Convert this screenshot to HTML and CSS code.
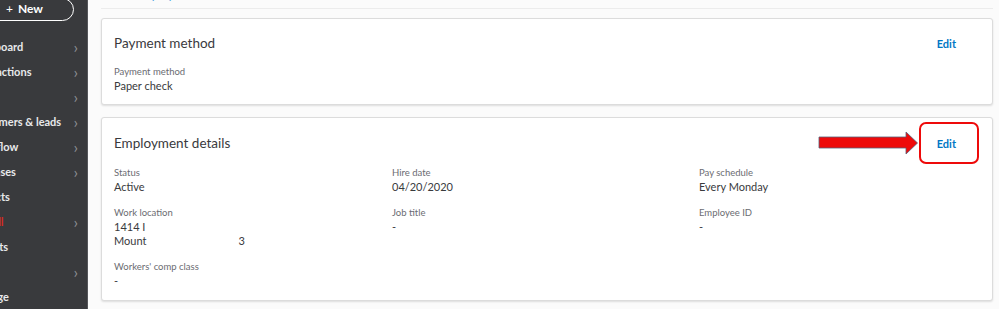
FILE: index.html
```html
<!DOCTYPE html>
<html>
<head>
<meta charset="utf-8">
<link rel="stylesheet" href="styles.css">
</head>
<body>
<aside class="sidebar">
  <div class="new-btn"><span class="plus">+</span> New</div>
  <nav class="nav">
    <div class="nav-item"><span>Dashboard</span><span class="chev">&#8250;</span></div>
    <div class="nav-item"><span>Transactions</span><span class="chev">&#8250;</span></div>
    <div class="nav-item"><span>Sales</span><span class="chev">&#8250;</span></div>
    <div class="nav-item"><span>Customers &amp; leads</span><span class="chev">&#8250;</span></div>
    <div class="nav-item"><span>Cash flow</span><span class="chev">&#8250;</span></div>
    <div class="nav-item"><span>Expenses</span><span class="chev">&#8250;</span></div>
    <div class="nav-item"><span>Projects</span></div>
    <div class="nav-item"><span class="red">Payroll</span><span class="chev">&#8250;</span></div>
    <div class="nav-item"><span>Reports</span></div>
    <div class="nav-item"><span>Taxes</span><span class="chev">&#8250;</span></div>
    <div class="nav-item"><span>Mileage</span></div>
  </nav>
</aside>
<main class="main">
  <div class="topbar"><span class="crumb">Employee list</span></div>

  <section class="card card-pay">
    <div class="card-head">
      <h2 class="card-title">Payment method</h2>
      <a class="edit">Edit</a>
    </div>
    <div class="field">
      <div class="label">Payment method</div>
      <div class="value">Paper check</div>
    </div>
  </section>

  <section class="card card-emp">
    <div class="card-head">
      <h2 class="card-title">Employment details</h2>
      <a class="edit">Edit</a>
    </div>
    <div class="grid">
      <div class="field"><div class="label">Status</div><div class="value">Active</div></div>
      <div class="field"><div class="label">Hire date</div><div class="value">04/20/2020</div></div>
      <div class="field"><div class="label">Pay schedule</div><div class="value">Every Monday</div></div>
      <div class="field"><div class="label">Work location</div><div class="value">1414 I<br>Mount<span class="redact"></span>3</div></div>
      <div class="field"><div class="label">Job title</div><div class="value">-</div></div>
      <div class="field"><div class="label">Employee ID</div><div class="value">-</div></div>
      <div class="field"><div class="label">Workers' comp class</div><div class="value">-</div></div>
    </div>
    <div class="highlight-box"></div>
    <svg class="arrow" width="101" height="25" viewBox="0 0 101 25">
      <polygon points="1,6 88,6 88,1 99.5,12 88,23 88,17 1,17" fill="#ee0a0a" stroke="#55607a" stroke-width="0.8"/>
    </svg>
  </section>
</main>
</body>
</html>
```
FILE: styles.css
```css
* { box-sizing: border-box; }
html, body { margin: 0; padding: 0; }
body {
  display: flex;
  width: 999px;
  height: 309px;
  overflow: hidden;
  font-family: Lato, "Open Sans", sans-serif;
  background: #fbfbfb;
  color: #393a3d;
}
.sidebar {
  width: 88px;
  flex: none;
  background: #393a3d;
  border-right: 1px solid #56575b;
  overflow: hidden;
  position: relative;
}
.new-btn {
  margin-left: -40px;
  margin-top: -2px;
  width: 114px;
  height: 23px;
  border: 1.5px solid #ffffff;
  border-radius: 12px;
  color: #fff;
  font-weight: 700;
  font-size: 12px;
  line-height: 20px;
  padding-left: 45px;
  white-space: nowrap;
}
.new-btn .plus { margin-right: 2px; font-weight: 400; }
.nav { margin-top: 13px; }
.nav-item {
  height: 25px;
  display: flex;
  align-items: center;
  justify-content: space-between;
  margin-left: -30px;
  padding-right: 9px;
  color: #e8e9eb;
  font-size: 11px;
  font-weight: 700;
  white-space: nowrap;
}
.nav-item .red { color: #d52b1e; }
.chev {
  color: #8d9096;
  font-size: 16px;
  font-weight: 400;
  margin-left: auto;
}
.main {
  flex: 1;
  padding: 0 6px 0 13px;
  min-width: 0;
}
.topbar {
  height: 9px;
  border-bottom: 1px solid #ececec;
  overflow: hidden;
  position: relative;
}
.crumb {
  display: block;
  margin-top: -12px;
  margin-left: 34px;
  color: #4aa3df;
  font-size: 12px;
  line-height: 14px;
}
.card {
  background: #fff;
  border: 1px solid #dcdcdc;
  border-radius: 3px;
  box-shadow: 0 1px 2px rgba(0,0,0,0.12);
  padding: 14px 13px 11px 12px;
  position: relative;
}
.card-pay { margin-top: 9px; height: 87px; }
.card-emp { margin-top: 12px; height: 184px; }
.card-emp { padding-top: 15px; }
.card-head {
  display: flex;
  align-items: center;
  justify-content: space-between;
  height: 20px;
  margin-bottom: 11px;
}
.card-emp .card-head { margin-bottom: 12px; }
.card-title {
  margin: 0;
  font-size: 13.5px;
  font-weight: 400;
  line-height: 20px;
  color: #393a3d;
}
.edit {
  color: #0077c5;
  font-weight: 700;
  font-size: 11px;
  margin-right: 23px;
}
.label {
  font-size: 9.5px;
  line-height: 15px;
  color: #6b6c72;
}
.value {
  font-size: 11px;
  line-height: 14px;
  color: #393a3d;
}
.redact { display: inline-block; width: 92px; }
.grid {
  display: grid;
  grid-template-columns: 278px 307px 1fr;
  row-gap: 11px;
}
.highlight-box {
  position: absolute;
  left: 817px;
  top: 4px;
  width: 60px;
  height: 42px;
  border: 2px solid #ee0a0a;
  border-radius: 7px;
}
.arrow {
  position: absolute;
  left: 716px;
  top: 13px;
}
```
